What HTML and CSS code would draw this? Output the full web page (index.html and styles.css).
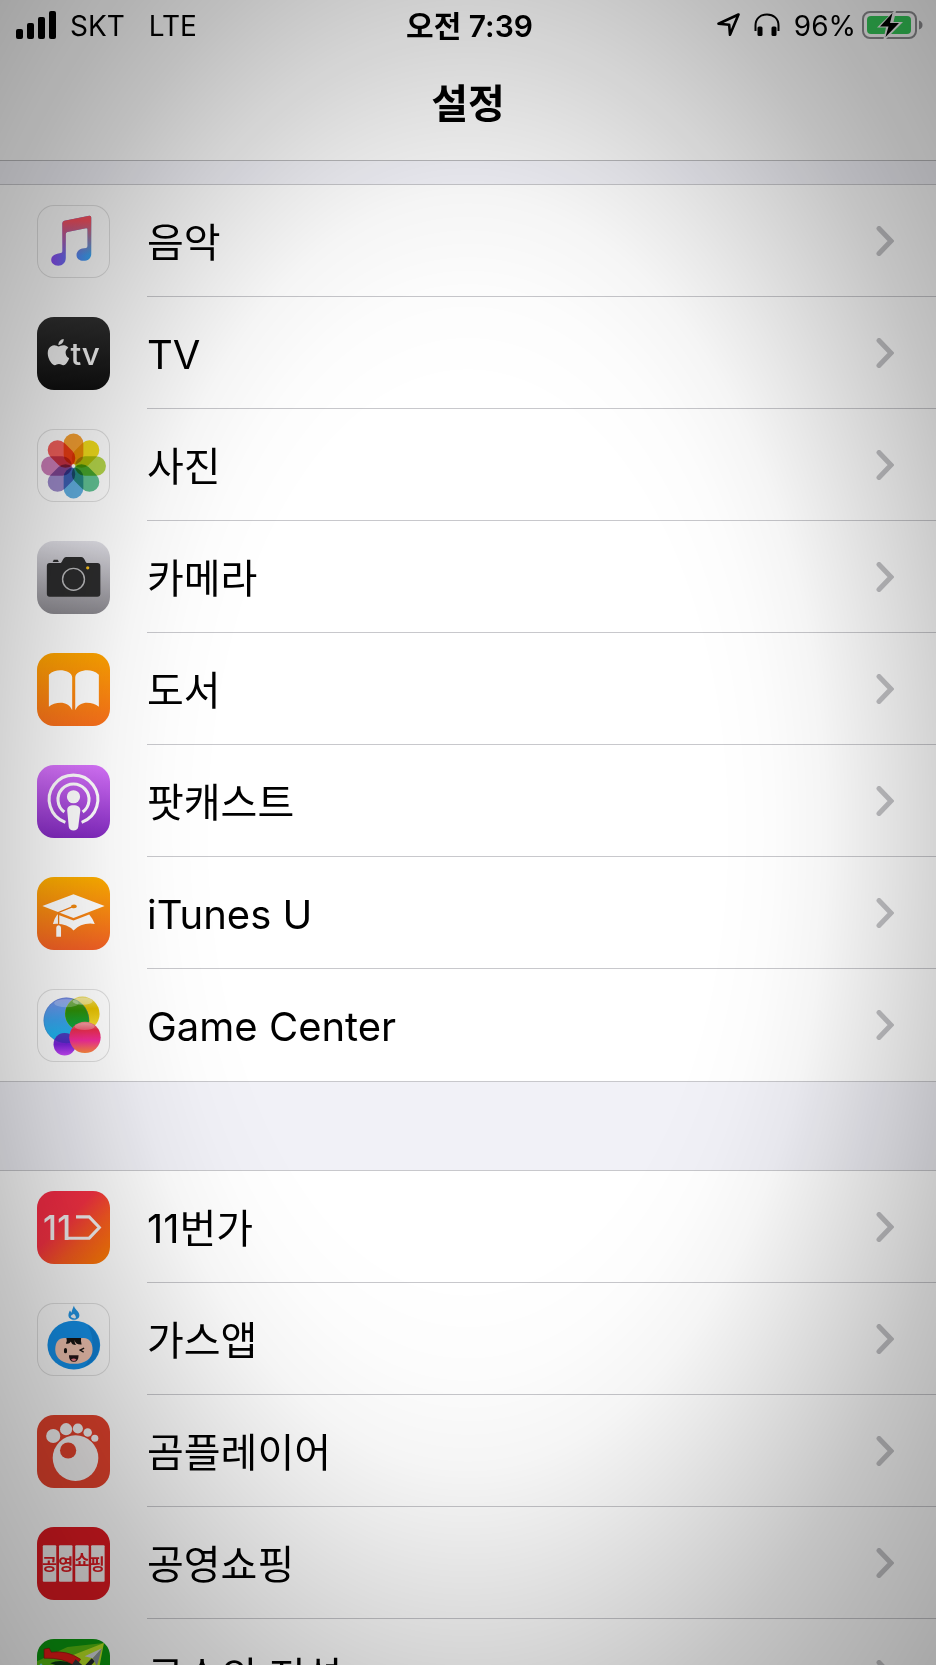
FILE: index.html
```html
<!DOCTYPE html>
<html lang="ko">
<head>
    <meta charset="UTF-8">
    <meta name="viewport" content="width=device-width, initial-scale=1.0">
    <title>설정</title>
    <link rel="stylesheet" href="styles.css">
</head>
<body>
    <svg class="defs" aria-hidden="true">
        <symbol id="chevron" viewBox="0 0 18 30">
            <path d="M3 2.5 15 15 3 27.5" fill="none" stroke="#c3c3c6" stroke-width="5" stroke-linecap="round"/>
        </symbol>
    </svg>

    <div class="screen">
        <header class="header">
            <div class="status-bar">
                <div class="status-left">
                    <svg class="signal" viewBox="0 0 40 28" aria-hidden="true">
                        <rect x="0" y="18" width="7" height="10" rx="2"/>
                        <rect x="11" y="12" width="7" height="16" rx="2"/>
                        <rect x="22" y="6" width="7" height="22" rx="2"/>
                        <rect x="33" y="0" width="7" height="28" rx="2"/>
                    </svg>
                    <span>SKT</span>
                    <span class="network">LTE</span>
                </div>
                <div class="status-time">오전 7:39</div>
                <div class="status-right">
                    <svg class="location" viewBox="0 0 24 24" aria-hidden="true">
                        <path d="M21.5 1.5 1.5 10.8 12.2 11.8 13 21.8Z" fill="none" stroke="#000" stroke-width="2.6" stroke-linejoin="round"/>
                    </svg>
                    <svg class="headphones" viewBox="0 0 26 24" aria-hidden="true">
                        <path d="M1.5 18V12.5C1.5 5.5 6.5 1.5 13 1.5S24.5 5.5 24.5 12.5V18" fill="none" stroke="#000" stroke-width="2"/>
                        <rect x="3.5" y="13.5" width="5" height="9.5" rx="1.5"/>
                        <rect x="17.5" y="13.5" width="5" height="9.5" rx="1.5"/>
                    </svg>
                    <span>96%</span>
                    <svg class="battery" viewBox="0 0 61 28" aria-hidden="true">
                        <rect x="1" y="1" width="53" height="26" rx="7" fill="none" stroke="#8c8c8f" stroke-width="2"/>
                        <path d="M57 9.5C59.5 10.5 60.5 12 60.5 14S59.5 17.5 57 18.5Z" fill="#8c8c8f"/>
                        <rect x="5" y="5" width="44" height="18" rx="4" fill="#36c759"/>
                        <path d="M32 0 15 16.500H24L21.5 28H24L41 11H31.5L34 0Z" fill="#f0f0f0"/>
                        <path d="M30.5 2 18 15.5H26.5L23.5 26 37 12H28Z"/>
                    </svg>
                </div>
            </div>
            <h1 class="title">설정</h1>
        </header>

        <main class="content">
            <nav class="group" aria-label="Apple 앱">
                <a class="row" href="#">
                    <svg class="icon outlined" viewBox="0 0 72 72" aria-hidden="true">
                        <defs>
                            <linearGradient id="music-base" x1="0" x2="1" y1="0" y2="0"><stop offset="0" stop-color="#8a4cf0"/><stop offset="1" stop-color="#38a8f4"/></linearGradient>
                            <linearGradient id="music-top" x1="0" x2="0" y1="0" y2="1"><stop offset="0.1" stop-color="#f4505f"/><stop offset="0.8" stop-color="#f4505f" stop-opacity="0"/></linearGradient>
                            <path id="note" d="M27 15.5 51.5 10.6Q53.5 10.3 53.5 12.3V48C53.5 53 50 55 46 55C41.5 55 39 52.5 39 49.5C39 46 41.5 43.8 45 43L48.5 42.4Q49.8 42 49.8 40.5V24.2Q49.8 22.6 48.3 22.9L30 26.6Q28.4 27 28.4 28.5V52C28.4 57 25 59.8 21 59.8C16.5 59.8 14 57 14 54C14 51 16.5 48.8 20 48L23.5 47.3Q25 47 25 45.5V18Q25 16 27 15.5Z"/>
                        </defs>
                        <use href="#note" fill="url(#music-base)"/>
                        <use href="#note" fill="url(#music-top)"/>
                    </svg>
                    <span class="cell"><span class="label">음악</span><svg class="chevron"><use href="#chevron"/></svg></span>
                </a>
                <a class="row" href="#">
                    <svg class="icon tv" viewBox="0 0 72 72" aria-hidden="true">
                        <path transform="translate(8.2 21.6) scale(1.08)" fill="#f4f4f4" d="M12.152 6.896c-.948 0-2.415-1.078-3.96-1.04-2.04.027-3.91 1.183-4.961 3.014-2.117 3.675-.546 9.103 1.519 12.09 1.013 1.454 2.208 3.09 3.792 3.039 1.52-.065 2.09-.987 3.935-.987 1.831 0 2.35.987 3.96.948 1.637-.026 2.676-1.48 3.676-2.948 1.156-1.688 1.636-3.325 1.662-3.415-.039-.013-3.182-1.221-3.22-4.857-.026-3.04 2.48-4.494 2.597-4.559-1.429-2.09-3.623-2.324-4.39-2.376-2-.156-3.675 1.09-4.61 1.09zM15.53 3.83c.843-1.012 1.4-2.427 1.245-3.83-1.207.052-2.662.805-3.532 1.818-.78.896-1.454 2.338-1.273 3.714 1.338.104 2.715-.688 3.559-1.701"/>
                        <text x="33" y="47" class="tv-text">tv</text>
                    </svg>
                    <span class="cell"><span class="label">TV</span><svg class="chevron"><use href="#chevron"/></svg></span>
                </a>
                <a class="row" href="#">
                    <svg class="icon outlined" viewBox="0 0 72 72" aria-hidden="true">
                        <defs><rect id="petal" x="26.3" y="4.5" width="19.4" height="30.5" rx="9.7"/></defs>
                        <g class="petals">
                            <use href="#petal" fill="#f5a033"/>
                            <use href="#petal" fill="#f0dc1c" transform="rotate(45 36 36.5)"/>
                            <use href="#petal" fill="#b5d64b" transform="rotate(90 36 36.5)"/>
                            <use href="#petal" fill="#62c394" transform="rotate(135 36 36.5)"/>
                            <use href="#petal" fill="#62b0e2" transform="rotate(180 36 36.5)"/>
                            <use href="#petal" fill="#9d8bcb" transform="rotate(225 36 36.5)"/>
                            <use href="#petal" fill="#cc7eb8" transform="rotate(270 36 36.5)"/>
                            <use href="#petal" fill="#f3605c" transform="rotate(315 36 36.5)"/>
                        </g>
                        <circle cx="36" cy="36.5" r="1.8" fill="#fff"/>
                    </svg>
                    <span class="cell"><span class="label">사진</span><svg class="chevron"><use href="#chevron"/></svg></span>
                </a>
                <a class="row" href="#">
                    <svg class="icon camera" viewBox="0 0 72 72" aria-hidden="true">
                        <path fill="#2c2c2d" d="M12.5 21.8H22.5C25.5 21.8 25 15.7 29 15.7H43.5C47.5 15.7 47 21.8 50 21.8H59.5Q62.5 21.8 62.5 24.8V52Q62.5 55 59.5 55H12.5Q9.7 55 9.7 52V24.8Q9.7 21.8 12.5 21.8Z"/>
                        <path fill="#2c2c2d" d="M16.5 18.5H20.5L21.5 20.7H15.5Z"/>
                        <circle cx="36" cy="37.8" r="10.8" fill="none" stroke="#b9b9bb" stroke-width="1.4"/>
                        <circle cx="50" cy="26.5" r="1.6" fill="#f5bd1c"/>
                    </svg>
                    <span class="cell"><span class="label">카메라</span><svg class="chevron"><use href="#chevron"/></svg></span>
                </a>
                <a class="row" href="#">
                    <svg class="icon books" viewBox="0 0 72 72" aria-hidden="true">
                        <path fill="#fff" d="M11.7 21.5C15 18 19 17 23 17C28 17 34.7 19.5 34.7 24V56.5C32.5 51 28 49 23.2 49C19 49 14.5 50.5 11.7 53ZM61 21.5C57.5 18 53.5 17 49.5 17C44.5 17 37.7 19.5 37.7 24V56.5C40 51 44.5 49 49.3 49C53.5 49 58 50.5 61 53Z"/>
                    </svg>
                    <span class="cell"><span class="label">도서</span><svg class="chevron"><use href="#chevron"/></svg></span>
                </a>
                <a class="row" href="#">
                    <svg class="icon podcast" viewBox="0 0 72 72" aria-hidden="true">
                        <g fill="none" stroke="#fff" stroke-width="3">
                            <path d="M28 56.6A24 24 0 1 1 44 56.6"/>
                            <path d="M27 46.4A15.3 15.3 0 1 1 45 46.4"/>
                        </g>
                        <circle cx="36" cy="31.3" r="6.5" fill="#fff"/>
                        <path fill="#fff" d="M36 39.7C40 39.7 42.8 41 42.7 45L40.7 61Q40 64.7 36 64.7T31.3 61L29.8 45C29.7 41 32 39.7 36 39.7Z"/>
                    </svg>
                    <span class="cell"><span class="label">팟캐스트</span><svg class="chevron"><use href="#chevron"/></svg></span>
                </a>
                <a class="row" href="#">
                    <svg class="icon itunes-u" viewBox="0 0 72 72" aria-hidden="true">
                        <path fill="#fff" d="M36 17 66.7 28.7 36 40.5 5.3 28.7Z"/>
                        <path fill="#fff" d="M20 37 36 43 51.5 37Q55 41 57 46.3Q44 44.5 36 52.8Q29 45 15.7 46.3Q17 41 20 37Z"/>
                        <path fill="none" stroke="#f07c12" stroke-width="1.3" d="M36 29 21.3 35V47"/>
                        <ellipse cx="36.5" cy="29" rx="2.8" ry="1.8" fill="#f28a10"/>
                        <path fill="#fff" d="M19 59V50Q19 47.5 21.3 47.5T23.7 50V59Z"/>
                    </svg>
                    <span class="cell"><span class="label">iTunes U</span><svg class="chevron"><use href="#chevron"/></svg></span>
                </a>
                <a class="row" href="#">
                    <svg class="icon outlined" viewBox="0 0 72 72" aria-hidden="true">
                        <defs>
                            <linearGradient id="gc-blue" x1="0" x2="0" y1="0" y2="1"><stop offset="0" stop-color="#7c8fe8"/><stop offset="0.5" stop-color="#3ca4ef"/><stop offset="1" stop-color="#12c0f4"/></linearGradient>
                            <linearGradient id="gc-yellow" x1="0" x2="0" y1="0" y2="1"><stop offset="0" stop-color="#eadb60"/><stop offset="0.35" stop-color="#e6c000"/><stop offset="1" stop-color="#fbe640"/></linearGradient>
                            <linearGradient id="gc-pink" x1="0" x2="0" y1="0" y2="1"><stop offset="0" stop-color="#f09090"/><stop offset="0.25" stop-color="#ec2f4c"/><stop offset="0.6" stop-color="#f52d9c"/><stop offset="1" stop-color="#ff8a3c"/></linearGradient>
                            <linearGradient id="gc-purple" x1="0" x2="0" y1="0" y2="1"><stop offset="0" stop-color="#6a53c8"/><stop offset="0.5" stop-color="#7a22dc"/><stop offset="1" stop-color="#c848fa"/></linearGradient>
                            <linearGradient id="gc-green" x1="0" x2="0" y1="0" y2="1"><stop offset="0" stop-color="#5f9a20"/><stop offset="0.4" stop-color="#2f8f08"/><stop offset="1" stop-color="#05b050"/></linearGradient>
                            <clipPath id="gc-clip"><circle cx="29" cy="31" r="22.5"/></clipPath>
                        </defs>
                        <circle cx="29" cy="31" r="22.5" fill="url(#gc-blue)"/>
                        <circle cx="44.7" cy="24.5" r="17" fill="url(#gc-yellow)"/>
                        <circle cx="44.7" cy="24.5" r="17" fill="url(#gc-green)" clip-path="url(#gc-clip)"/>
                        <circle cx="29" cy="31" r="22.2" fill="none" stroke="#5674b8" stroke-opacity="0.5" stroke-width="0.6"/>
                        <circle cx="27.3" cy="54.5" r="11" fill="url(#gc-purple)"/>
                        <circle cx="27.3" cy="54.5" r="11" fill="#2b2fb8" fill-opacity="0.5" clip-path="url(#gc-clip)"/>
                        <circle cx="47.3" cy="47.7" r="15.5" fill="url(#gc-pink)"/>
                        <ellipse cx="29" cy="14" rx="12" ry="4" fill="#fff" fill-opacity="0.25"/>
                        <ellipse cx="45" cy="12" rx="10" ry="3.5" fill="#fff" fill-opacity="0.4"/>
                        <ellipse cx="47" cy="37" rx="10" ry="3.5" fill="#fff" fill-opacity="0.25"/>
                    </svg>
                    <span class="cell"><span class="label">Game Center</span><svg class="chevron"><use href="#chevron"/></svg></span>
                </a>
            </nav>

            <nav class="group" aria-label="설치된 앱">
                <a class="row" href="#">
                    <svg class="icon eleven" viewBox="0 0 72 72" aria-hidden="true">
                        <text x="6 20" y="48" class="eleven-text">11</text>
                        <path fill="none" stroke="#f6f2f2" stroke-width="3" d="M29 46.5H51.5L61.5 36 51.5 25.5H38.5"/>
                    </svg>
                    <span class="cell"><span class="label">11번가</span><svg class="chevron"><use href="#chevron"/></svg></span>
                </a>
                <a class="row" href="#">
                    <svg class="icon outlined" viewBox="0 0 72 72" aria-hidden="true">
                        <path fill="#2497e6" d="M36.5 2.5C36.5 6 41.8 8 41.8 12C41.8 15 39.5 16.4 36.5 16.4S31 15 31 12C31 10 32 8.5 32.5 7.5L34 9.5C34.5 7 35.5 5 36.5 2.5Z"/>
                        <path fill="#eef4fa" d="M36.5 10.5Q38.8 13 38.4 14.6T34.6 14.6T36.5 10.5Z"/>
                        <ellipse cx="36.3" cy="41.5" rx="26" ry="24" fill="#1591ea"/>
                        <path d="M50 22C66 32 66 55 46 63C56 54 58 36 50 22Z" fill="#0d74c4" fill-opacity="0.5"/>
                        <path fill="#f3c5b2" d="M27 34.5H46C52 34.5 54.8 40 54.8 46C54.8 55 47 60 36.5 60S18 55 18 46C18 39 21 34.5 27 34.5Z"/>
                        <path fill="#181412" d="M29 34.5H43.5Q43 38 44 41Q38 41.5 37 36.5Q37 40 38.5 41.5Q34 41.5 33.5 38Q31.5 41 28.5 40Q30 37 29 34.5Z"/>
                        <rect x="26.6" y="44.5" width="3" height="5" rx="1.5" fill="#181412"/>
                        <path d="M46.5 44.5 42.5 46.5 46 48.5" fill="none" stroke="#181412" stroke-width="1.3"/>
                        <path d="M31.5 51.5H41Q41 58 36.3 58T31.5 51.5Z" fill="#241418"/>
                        <path d="M33.5 56Q36.3 53.5 39 56Q36.3 58.5 33.5 56Z" fill="#f0808c"/>
                    </svg>
                    <span class="cell"><span class="label">가스앱</span><svg class="chevron"><use href="#chevron"/></svg></span>
                </a>
                <a class="row" href="#">
                    <svg class="icon gom" viewBox="0 0 72 72" aria-hidden="true">
                        <g fill="#f5f3f3">
                            <circle cx="16" cy="20.7" r="7"/>
                            <circle cx="28.7" cy="14" r="6"/>
                            <circle cx="40.3" cy="13.3" r="5"/>
                            <circle cx="50" cy="17.3" r="4.2"/>
                            <circle cx="57" cy="23" r="3.5"/>
                        </g>
                        <circle cx="38" cy="42.5" r="23.5" fill="#e3432d"/>
                        <circle cx="38" cy="42.5" r="22.5" fill="#f5f3f3"/>
                        <circle cx="30.7" cy="35" r="8" fill="#e3432d"/>
                    </svg>
                    <span class="cell"><span class="label">곰플레이어</span><svg class="chevron"><use href="#chevron"/></svg></span>
                </a>
                <a class="row" href="#">
                    <svg class="icon shopping" viewBox="0 0 72 72" aria-hidden="true">
                        <g fill="#f0ecec">
                            <rect x="5.7" y="18" width="13.3" height="36" rx="1"/>
                            <rect x="21.7" y="18" width="13.3" height="36" rx="1"/>
                            <rect x="37.7" y="18" width="13.3" height="36" rx="1"/>
                            <rect x="53.4" y="18" width="13.3" height="36" rx="1"/>
                        </g>
                        <text class="shopping-text" y="42"><tspan x="5">공</tspan><tspan x="21">영</tspan><tspan x="37" y="38">쇼</tspan><tspan x="52" y="42">핑</tspan></text>
                    </svg>
                    <span class="cell"><span class="label">공영쇼핑</span><svg class="chevron"><use href="#chevron"/></svg></span>
                </a>
                <a class="row" href="#">
                    <svg class="icon archery" viewBox="0 0 72 72" aria-hidden="true">
                        <path fill="#58bd12" d="M0 72V22L30 8 66 4 50 72Z"/>
                        <path fill="#d6f02c" d="M30 18 66 4 60 36 40 50 34 30Z" fill-opacity="0.8"/>
                        <path fill="#0c3c14" d="M13 24Q24 19 36 25L32 30Z"/>
                        <path fill="#ea1c18" stroke="#8e0d0d" stroke-width="0.6" d="M7 19V10L12 9 14 13Q30 11 43 20L38 27Q26 18 7 19Z"/>
                        <path fill="#34383c" d="M38 20 45 26 40 34 34 26Z"/>
                        <path fill="#22262a" d="M36 38 54 19 57 22 39 42Z"/>
                        <path fill="#d5dae0" d="M64 9 47 17 55 19Z"/>
                        <path fill="#8c959f" d="M64 9 55 19 59 27Z"/>
                        <path fill="#68dce8" d="M1 27 4 24 8 28Z"/>
                    </svg>
                    <span class="cell"><span class="label">궁수의 전설</span><svg class="chevron"><use href="#chevron"/></svg></span>
                </a>
            </nav>
        </main>
    </div>
</body>
</html>
```

FILE: styles.css
```css
* {
    margin: 0;
    padding: 0;
    box-sizing: border-box;
}

body {
    font-family: Inter, 'Noto Sans CJK KR', sans-serif;
    background-color: #f1f1f7;
    color: #000;
}

.defs {
    display: none;
}

.screen {
    display: flex;
    flex-direction: column;
    height: 100vh;
    overflow: hidden;
}

/* darkened edges over the whole screen */
.screen::after {
    content: '';
    position: fixed;
    inset: 0;
    pointer-events: none;
    background: radial-gradient(ellipse farthest-corner at center,
        rgba(0, 0, 0, 0) 38%,
        rgba(0, 0, 0, 0.01) 46%,
        rgba(0, 0, 0, 0.04) 54%,
        rgba(0, 0, 0, 0.09) 61%,
        rgba(0, 0, 0, 0.17) 71%,
        rgba(0, 0, 0, 0.23) 79%,
        rgba(0, 0, 0, 0.28) 87%,
        rgba(0, 0, 0, 0.34) 100%);
}

.header {
    flex-shrink: 0;
    background: #f9f9f9;
    border-bottom: 1px solid #b8b8bb;
}

.status-bar {
    display: grid;
    grid-template-columns: 1fr auto 1fr;
    align-items: center;
    height: 50px;
    padding: 0 13px 0 16px;
    font-size: 28px;
    line-height: 36px;
}

.status-bar span,
.status-time {
    padding-top: 2px;
}

.status-left,
.status-right {
    display: flex;
    align-items: center;
}

.status-right {
    justify-content: flex-end;
}

.signal {
    width: 40px;
    height: 28px;
    margin-right: 14px;
}

.network {
    margin-left: 24px;
}

.status-time {
    font-size: 30px;
    font-weight: 600;
}

.location {
    width: 24px;
    height: 24px;
    margin-right: 13px;
}

.headphones {
    width: 26px;
    height: 24px;
    margin-right: 14px;
}

.battery {
    width: 61px;
    height: 28px;
    margin-left: 6px;
}

.title {
    height: 110px;
    font-size: 40px;
    line-height: 108px;
    font-weight: 600;
    text-align: center;
}

.content {
    flex: 1;
    min-height: 0;
    overflow: hidden;
    padding-top: 23px;
}

.group {
    background: #fff;
    border-top: 1px solid #c8c8cc;
    border-bottom: 1px solid #c8c8cc;
}

.group + .group {
    margin-top: 88px;
}

.row {
    display: flex;
    align-items: center;
    height: 112px;
    padding-left: 37px;
    color: inherit;
    text-decoration: none;
}

.icon {
    flex-shrink: 0;
    width: 73px;
    height: 73px;
    margin-right: 37px;
    border-radius: 17px;
}

.outlined {
    background: #fff;
    box-shadow: inset 0 0 0 1px #e0e0e0;
}

.cell {
    flex: 1;
    display: flex;
    align-items: center;
    justify-content: space-between;
    height: 112px;
    padding-right: 42px;
    border-bottom: 1px solid #c8c8cc;
}

.row:last-child .cell {
    border-bottom: none;
}

.label {
    font-size: 40px;
    line-height: 56px;
    padding-top: 4px;
}

.chevron {
    width: 18px;
    height: 30px;
}

.tv {
    background: linear-gradient(#303030, #101010);
}

.tv-text {
    font-size: 31px;
    font-weight: 500;
    fill: #f4f4f4;
}

.petals {
    isolation: isolate;
}

.petals use {
    mix-blend-mode: multiply;
}

.camera {
    background: linear-gradient(#e2e1e8, #8a888e);
}

.books {
    background: linear-gradient(#ffa500, #fa701c);
}

.podcast {
    background: linear-gradient(#d874fc, #822ac0);
}

.itunes-u {
    background: linear-gradient(#fdae00, #f46026);
}

.eleven {
    background: linear-gradient(135deg, #f82d46 15%, #f83244 40%, #fa5a22 65%, #fc8000);
}

.eleven-text {
    font-size: 33px;
    font-weight: 500;
    fill: #f6f2f2;
}

.gom {
    background: #e3432d;
}

.shopping {
    background: #dd1a22;
}

.shopping-text {
    font-size: 16px;
    font-weight: 700;
    fill: #dd1a22;
}

.archery {
    background: #0c9a10;
}
```
